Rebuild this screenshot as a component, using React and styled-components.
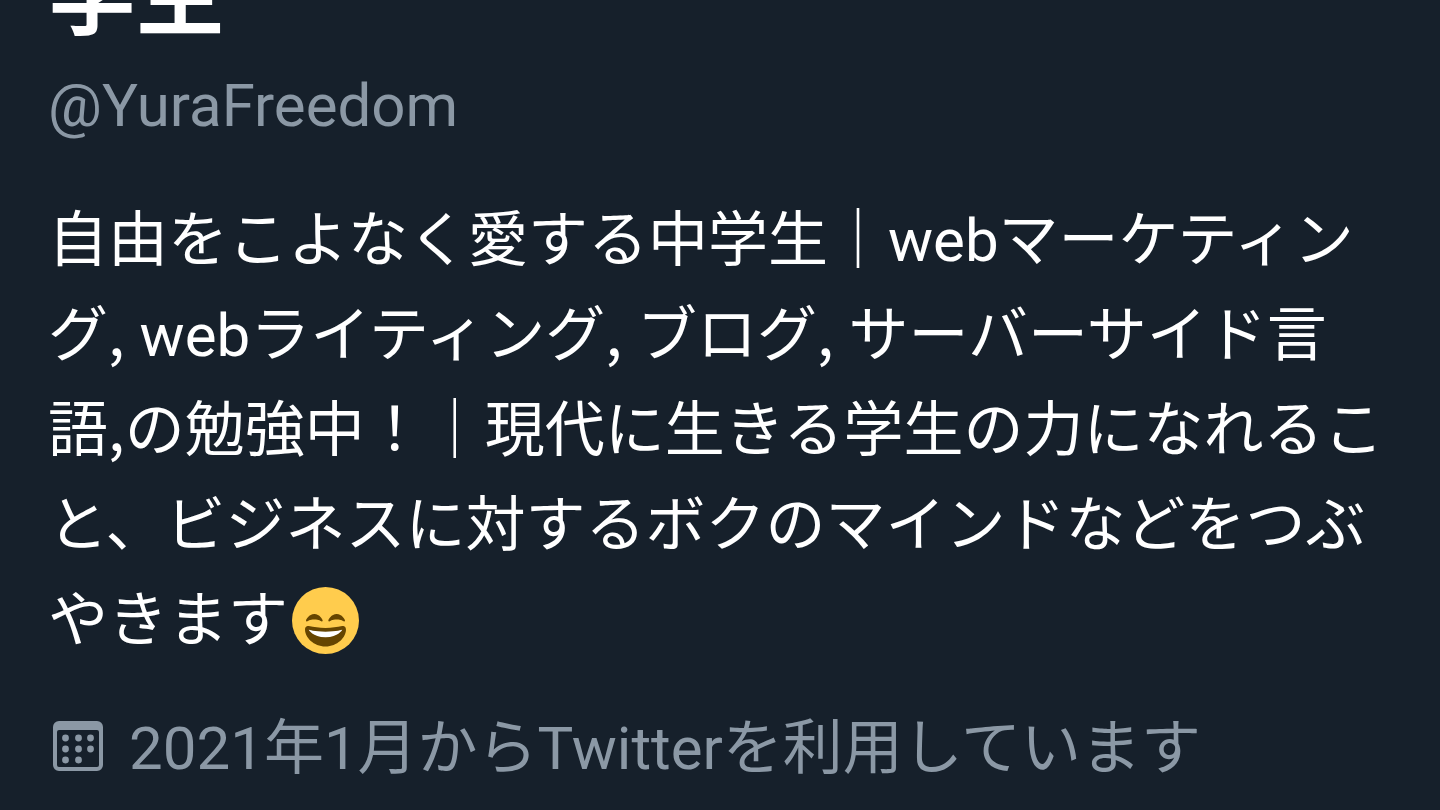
import React from "react";
import styled, { createGlobalStyle } from "styled-components";

const GlobalStyle = createGlobalStyle`
  body {
    margin: 0;
    background: #16202b;
    color: #ffffff;
    font-family: Roboto, "Noto Sans CJK JP", sans-serif;
    overflow: hidden;
  }
`;

const Profile = styled.main`
  display: flex;
  flex-direction: column;
  padding: 0 48px;
`;

const NameBar = styled.header`
  display: flex;
  align-items: flex-end;
  height: 71px;
  overflow: hidden;
`;

const Name = styled.h1`
  margin: 0;
  font-size: 88px;
  line-height: 148px;
  font-weight: 700;
`;

const Handle = styled.a`
  align-self: flex-start;
  color: #8b98a5;
  font-size: 60px;
  line-height: 70px;
  text-decoration: none;
`;

const Bio = styled.p`
  margin: 52px 0 46px;
  font-size: 60px;
  line-height: 95px;
`;

const Comma = styled.span`
  font-family: "Noto Sans CJK JP", sans-serif;
  line-height: 60px;
`;

const Emoji = styled.svg`
  width: 67px;
  height: 67px;
  margin-left: 4px;
  vertical-align: -13px;
`;

const Joined = styled.div`
  display: flex;
  align-items: flex-start;
  gap: 26px;
  padding-left: 5px;
  color: #8b98a5;
  font-size: 60px;
  line-height: 70px;
`;

const CalendarIcon = styled.svg`
  flex: none;
  width: 50px;
  height: 50px;
  margin-top: 7px;
  fill: currentColor;
`;

const dots = [
  [12, 17], [25, 17], [37, 17],
  [12, 28], [25, 28], [37, 28],
  [12, 39], [25, 39],
];

function Calendar() {
  return (
    <CalendarIcon viewBox="0 0 50 50" aria-hidden="true">
      <path
        fillRule="evenodd"
        d="M6 0h38a6 6 0 0 1 6 6v38a6 6 0 0 1-6 6H6a6 6 0 0 1-6-6V6a6 6 0 0 1 6-6zM6 9a2 2 0 0 0-2 2v33a2 2 0 0 0 2 2h38a2 2 0 0 0 2-2V11a2 2 0 0 0-2-2z"
      />
      {dots.map(([x, y]) => (
        <circle key={`${x}-${y}`} cx={x + 0.5} cy={y} r="3.4" />
      ))}
    </CalendarIcon>
  );
}

function Smile() {
  return (
    <Emoji viewBox="0 0 36 36" role="img" aria-label="😄">
      <circle cx="18" cy="18" r="18" fill="#FFCC4D" />
      <path
        fill="#664500"
        d="M28.457 17.797c-.06-.135-1.499-3.297-4.457-3.297-2.957 0-4.397 3.162-4.457 3.297-.092.207-.032.449.145.591.175.142.426.147.61.014.012-.009 1.262-.902 3.702-.902 2.426 0 3.674.881 3.702.901.088.066.194.099.298.099.11 0 .221-.037.312-.109.177-.142.238-.386.145-.594zm-12 0c-.06-.135-1.499-3.297-4.457-3.297-2.957 0-4.397 3.162-4.457 3.297-.092.207-.032.449.144.591.176.142.427.147.61.014.013-.009 1.262-.902 3.703-.902 2.426 0 3.674.881 3.702.901.089.066.194.099.298.099.11 0 .221-.037.312-.109.178-.142.237-.386.145-.594zM18 22c-3.623 0-6.027-.422-9-1-.679-.131-2 0-2 2 0 4 4.595 9 11 9 6.404 0 11-5 11-9 0-2-1.321-2.132-2-2-2.973.578-5.377 1-9 1z"
      />
      <path fill="#FFF" d="M9 23s3 1 9 1 9-1 9-1-2 4-9 4-9-4-9-4z" />
    </Emoji>
  );
}

export default function App() {
  return (
    <>
      <GlobalStyle />
      <Profile lang="ja">
        <NameBar>
          <Name>学生</Name>
        </NameBar>
        <Handle href="#profile">@YuraFreedom</Handle>
        <Bio>
          自由をこよなく愛する中学生｜webマーケティング<Comma>,</Comma>{" "}
          webライティング<Comma>,</Comma> ブログ<Comma>,</Comma>{" "}
          サーバーサイド言語<Comma>,</Comma>の勉強中！｜現代に生きる学生の力になれること、ビジネスに対するボクのマインドなどをつぶやきます
          <Smile />
        </Bio>
        <Joined>
          <Calendar />
          <span>2021年1月からTwitterを利用しています</span>
        </Joined>
      </Profile>
    </>
  );
}
